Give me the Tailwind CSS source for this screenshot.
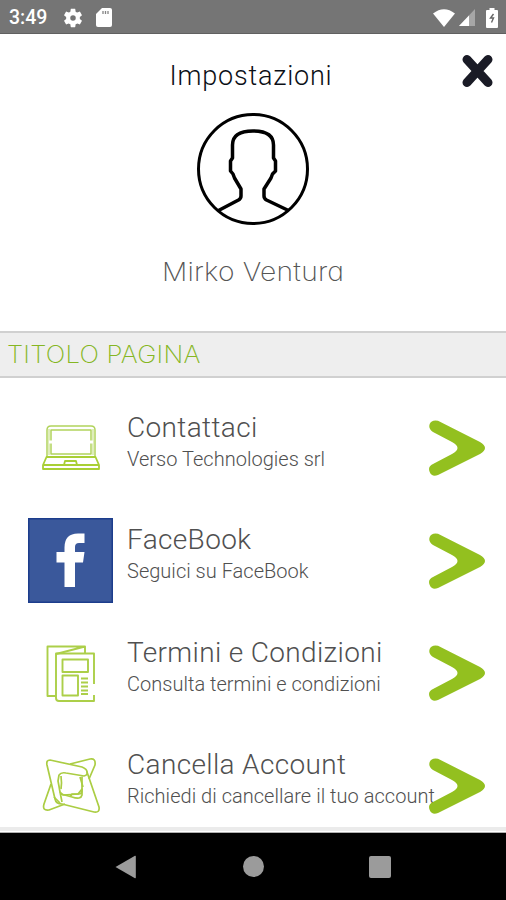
<!DOCTYPE html>
<html lang="it">
<head>
<meta charset="utf-8">
<title>Impostazioni</title>
<script src="https://cdn.jsdelivr.net/npm/@tailwindcss/browser@4"></script>
</head>
<body class="bg-white">
<div class="flex h-[900px] w-[506px] flex-col overflow-hidden bg-white font-['Roboto',sans-serif]">

  <!-- Status bar -->
  <header class="flex h-[34px] shrink-0 items-center border-b border-[#606060] bg-[#757575] pl-[9px] pr-[8px] text-white">
    <span class="w-[53px] whitespace-nowrap pt-[3px] text-[19.5px] font-medium leading-none">3:49</span>
    <svg class="mt-[2px] h-[22px] w-[22px]" viewBox="0 0 24 24" fill="currentColor"><path d="M19.43 12.98c.04-.32.07-.64.07-.98s-.03-.66-.07-.98l2.11-1.65c.19-.15.24-.42.12-.64l-2-3.460c-.12-.22-.39-.3-.61-.22l-2.490 1c-.52-.4-1.080-.73-1.690-.98l-.38-2.650C14.460 2.180 14.250 2 14 2h-4c-.25 0-.46.18-.49.42l-.38 2.650c-.61.25-1.170.59-1.690.98l-2.490-1c-.23-.09-.49 0-.61.22l-2 3.460c-.13.22-.07.49.12.64l2.110 1.650c-.04.32-.07.65-.07.98s.03.66.07.98l-2.110 1.650c-.19.15-.24.42-.12.64l2 3.460c.12.22.39.3.61.22l2.490-1c.52.4 1.080.73 1.690.98l.38 2.650c.03.24.24.42.49.42h4c.25 0 .46-.18.49-.42l.38-2.650c.61-.25 1.170-.59 1.690-.98l2.490 1c.23.09.49 0 .61-.22l2-3.460c.12-.22.07-.49-.12-.64l-2.110-1.650zM12 15a3 3 0 1 1 0-6 3 3 0 0 1 0 6z"/></svg>
    <svg class="ml-[12px] mt-[2px] h-[19px] w-[16px]" viewBox="0 0 16 19"><path d="M6 0h8q2 0 2 2v15q0 2-2 2H2q-2 0-2-2V6z" fill="#fff"/><path d="M7 3v3M9.500 3v3M12 3v3" stroke="#858585" stroke-width="1.300"/></svg>
    <div class="ml-auto flex items-center pt-[2px]">
      <svg class="h-[18px] w-[22px]" viewBox="0 0 22 18"><path d="M0 4.500Q11-4 22 4.500L11 18z" fill="#fff"/></svg>
      <svg class="ml-[4px] h-[17px] w-[16px]" viewBox="0 0 16 17"><path d="M16 0v17H0z" fill="#a6a6a6"/><path d="M10 6.500V17H0z" fill="#fff"/></svg>
      <svg class="ml-[11px] h-[20px] w-[12px]" viewBox="0 0 12 20"><path d="M3.500 0h5v2H11q1 0 1 1v16q0 1-1 1H1q-1 0-1-1V3q0-1 1-1h2.500z" fill="#fff"/><path d="M7.500 6L4.500 10H7.500L5.500 14.500" fill="none" stroke="#666" stroke-width="1.400"/></svg>
    </div>
  </header>

  <!-- Profile -->
  <section class="relative flex h-[297px] shrink-0 flex-col items-center">
    <h1 class="mt-[27px] whitespace-nowrap pr-[4px] text-[27px] font-light leading-[30px] tracking-[0.8px] text-[#0c0f16]">Impostazioni</h1>
    <button class="absolute left-[461px] top-[20px]" aria-label="Chiudi">
      <svg class="h-[34px] w-[33px]" viewBox="0 0 33 34"><path d="M6 5.500L27 28.500M27 5.500L6 28.500" stroke="#1a1b26" stroke-width="9" stroke-linecap="round"/></svg>
    </button>
    <svg class="mt-[21px] h-[114px] w-[114px]" viewBox="0 0 114 114" fill="none" stroke="#000" stroke-linejoin="round">
      <circle cx="57" cy="57" r="54.500" stroke-width="3"/>
      <path d="M22.500 98.500L42.500 88Q45 86.500 45 84V77L38.500 66L37 62L34.500 59V49L36.500 46V33Q36.500 19 57 19Q77.500 19 77.500 33V46L79.500 49V59L76.500 62L75 66L68 77V84Q68 86.500 70.500 88L92.500 98.500" stroke-width="3.500"/>
    </svg>
    <p class="mt-[29px] scale-x-[1.085] whitespace-nowrap pl-[1px] font-['Inter',sans-serif] text-[26px] font-extralight leading-[34px] tracking-[0.2px] text-[#555] [font-feature-settings:'cv11']">Mirko Ventura</p>
  </section>

  <div class="flex h-[47px] shrink-0 items-center border-y-2 border-[#d0d0d0] bg-[#eeeeee] pl-[7px]">
    <h2 class="origin-left scale-x-[1.075] whitespace-nowrap font-['Inter',sans-serif] text-[24px] font-extralight tracking-[0.2px] text-[#85b622]">TITOLO PAGINA</h2>
  </div>

  <!-- Menu -->
  <main class="flex h-[449px] shrink-0 flex-col overflow-hidden pt-[14px] text-[#505050]">
    <a class="flex h-[112.500px] shrink-0 items-center pl-[28px]">
      <svg class="relative -top-px h-[85px] w-[85px] shrink-0" viewBox="0 0 85 85" fill="none" stroke="#b1d35c" stroke-width="1.500" stroke-linejoin="round"><path d="M19 52V25q0-4 4-4h40q4 0 4 4v27"/><path d="M23 49V25h40v24z"/><path d="M21 24v26M65 24v26" stroke="#d5e8a5"/><path d="M18.500 52h49L71 60v4H15v-4zM15 60h56M36 60l1-4h11l1 4" stroke="#a9cf35" stroke-width="1.800"/><path d="M21 37h3M62 37h3" stroke="#fff" stroke-width="3"/></svg>
      <div class="ml-[14px] w-[300px] shrink-0 whitespace-nowrap pb-[13px]">
        <p class="text-[28px] font-light leading-[34px] tracking-[0.35px]">Contattaci</p>
        <p class="text-[20px] font-light leading-[28px] tracking-[0.02px]">Verso Technologies srl</p>
      </div>
      <svg class="relative ml-[1px] h-[58px] w-[58px] shrink-0" viewBox="0 0 58 58" fill="#93c01f"><path d="M10 1.700L52 23q10 6 0 12L10 56Q4 58.500 1.700 53T5 45L24 35Q35 29 24 23L5 13Q0 9.500 1.700 5T10 1.700z"/></svg>
    </a>
    <a class="flex h-[112.500px] shrink-0 items-center pl-[28px]">
      <svg class="h-[85px] w-[85px] shrink-0" viewBox="0 0 85 85"><path d="M.75.75h83.500v83.500H.75z" fill="#3a589b" stroke="#1c3d8c" stroke-width="1.500"/><path d="M36.500 69V44.500H28.500V34H36.500V29.500Q36.500 15.500 50 15.500H56.500V25H51Q47 25 47 29V34H56.500L55 44.500H47V69z" fill="#fff"/></svg>
      <div class="ml-[14px] w-[300px] shrink-0 whitespace-nowrap pb-[14px]">
        <p class="text-[28px] font-light leading-[34px] tracking-[0.35px]">FaceBook</p>
        <p class="text-[20px] font-light leading-[28px] tracking-[0.02px]">Seguici su FaceBook</p>
      </div>
      <svg class="relative ml-[1px] h-[58px] w-[58px] shrink-0" viewBox="0 0 58 58" fill="#93c01f"><path d="M10 1.700L52 23q10 6 0 12L10 56Q4 58.500 1.700 53T5 45L24 35Q35 29 24 23L5 13Q0 9.500 1.700 5T10 1.700z"/></svg>
    </a>
    <a class="flex h-[112.500px] shrink-0 items-center pl-[28px]">
      <svg class="h-[85px] w-[85px] shrink-0" viewBox="0 0 85 85" fill="none" stroke="#accf49" stroke-width="1.900" stroke-linejoin="round"><path d="M28 65H19.500V15.500H57V22M28 23L57 15.500"/><path d="M66 53V22.500H28V67q0 3 3 3H66V64"/><path d="M34.500 28.500H60V41H34.500zM34.500 44.500H50V64.500H34.500zM53 47.500H60M53 51.500H60M53 55.500H60M53 59.500H60M53 63H60"/></svg>
      <div class="ml-[14px] w-[300px] shrink-0 whitespace-nowrap pb-[13px]">
        <p class="text-[28px] font-light leading-[34px] tracking-[0.35px]">Termini e Condizioni</p>
        <p class="text-[20px] font-light leading-[28px] tracking-[0.02px]">Consulta termini e condizioni</p>
      </div>
      <svg class="relative ml-[1px] h-[58px] w-[58px] shrink-0" viewBox="0 0 58 58" fill="#93c01f"><path d="M10 1.700L52 23q10 6 0 12L10 56Q4 58.500 1.700 53T5 45L24 35Q35 29 24 23L5 13Q0 9.500 1.700 5T10 1.700z"/></svg>
    </a>
    <a class="flex h-[112.500px] shrink-0 items-center pl-[28px]">
      <svg class="h-[85px] w-[85px] shrink-0" viewBox="0 0 85 85" fill="none" stroke="#abcd43" stroke-width="1.700" stroke-linejoin="round"><path d="M22 17L54 24Q59 26 59 29L71 64Q72 70 66 69L34 61Q28 61 27 56L19 22Q18 17 22 17z"/><path d="M42 21L62 16Q68 15 67 22L61 36M37 61L21 67Q14 68 16 61L23 41"/><path d="M31 32Q33 29 38 30L56 33Q60 32 59 29M31 32L30 38Q31 43 32 49L35 52L51 51Q54 51 54 47L54 33"/><path d="M32 49L34 59M33 51L44 54Q53 57 54 52V46L50 51L44 51L42 54M33 33Q34 40 33 46M52 34L55 44M26 54L32 60"/></svg>
      <div class="ml-[14px] w-[300px] shrink-0 whitespace-nowrap pb-[14px]">
        <p class="text-[28px] font-light leading-[34px] tracking-[0.35px]">Cancella Account</p>
        <p class="text-[20px] font-light leading-[28px] tracking-[0.03px]">Richiedi di cancellare il tuo account</p>
      </div>
      <svg class="relative ml-[1px] h-[58px] w-[58px] shrink-0" viewBox="0 0 58 58" fill="#93c01f"><path d="M10 1.700L52 23q10 6 0 12L10 56Q4 58.500 1.700 53T5 45L24 35Q35 29 24 23L5 13Q0 9.500 1.700 5T10 1.700z"/></svg>
    </a>
  </main>
  <div class="h-[6px] shrink-0 border-b border-t-4 border-b-[#b0b0b0] border-t-[#ebebeb] bg-white"></div>

  <!-- System navigation -->
  <nav class="flex min-h-0 flex-1 items-center bg-black text-[#9b9b9b]">
    <svg class="ml-[115px] h-[24px] w-[21px]" viewBox="0 0 21 24"><path d="M.5 12L20 .8q.8-.3.8.7v21q0 1-.8.700z" fill="currentColor"/></svg>
    <span class="ml-[107px] size-[21px] rounded-full bg-[#9b9b9b]"></span>
    <span class="ml-[105px] size-[22px] rounded-[2px] bg-[#9b9b9b]"></span>
  </nav>
</div>
</body>
</html>
